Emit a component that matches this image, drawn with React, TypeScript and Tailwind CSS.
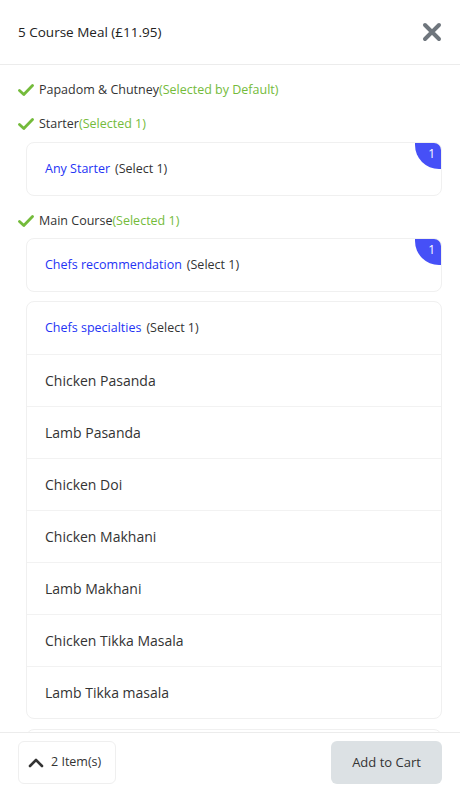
import React from "react";

const font = { fontFamily: '"Open Sans", "Liberation Sans", sans-serif' };

function Check() {
  return (
    <svg width="16" height="14" viewBox="0 0 16 14" className="mr-[5px] shrink-0">
      <path d="M1.5 7.5 L5.8 11.5 L14.5 2.5" fill="none" stroke="#74bb3b" strokeWidth="2.8" strokeLinecap="round" strokeLinejoin="round" />
    </svg>
  );
}

function Heading({ name, note }: { name: string; note: string }) {
  return (
    <div className="flex h-[34px] items-center text-[12.5px] text-[#333]">
      <Check />
      <span>{name}</span>
      <span className="text-[#74bb3b]">{note}</span>
    </div>
  );
}

function GroupCard({ title, badge, children }: { title: string; badge?: boolean; children?: React.ReactNode }) {
  return (
    <div className="relative ml-2 overflow-hidden rounded-lg border border-[#f0f0f0] bg-white">
      {badge && (
        <div className="absolute right-0 top-0 flex h-[26px] w-[26px] items-start justify-end rounded-bl-[24px] bg-[#4650f7] pr-[6px] pt-[2px] text-[12px] text-white">
          1
        </div>
      )}
      <div className="flex h-[52px] items-center px-[18px] text-[12.5px]">
        <span className="text-[#2433f5]">{title}</span>
        <span className="ml-[5px] text-[#333]">(Select 1)</span>
      </div>
      {children}
    </div>
  );
}

const dishes = [
  "Chicken Pasanda",
  "Lamb Pasanda",
  "Chicken Doi",
  "Chicken Makhani",
  "Lamb Makhani",
  "Chicken Tikka Masala",
  "Lamb Tikka masala",
];

export default function App() {
  return (
    <div className="flex h-[800px] w-full flex-col bg-white" style={font}>
      <header className="flex h-[65px] shrink-0 items-center justify-between border-b border-[#ececec] pl-[18px] pr-[18px]">
        <h1 className="text-[13.5px] text-[#222]">5 Course Meal (£11.95)</h1>
        <svg width="20" height="20" viewBox="0 0 20 20">
          <path d="M3 3 L17 17 M17 3 L3 17" stroke="#6f767d" strokeWidth="4" strokeLinecap="round" />
        </svg>
      </header>

      <main className="flex-1 overflow-hidden px-[18px] pt-[8px]">
        <Heading name="Papadom & Chutney" note="(Selected by Default)" />
        <Heading name="Starter" note="(Selected 1)" />
        <div className="mt-px">
          <GroupCard title="Any Starter" badge />
        </div>
        <div className="mt-[8px]">
          <Heading name="Main Course" note="(Selected 1)" />
        </div>
        <div>
          <GroupCard title="Chefs recommendation" badge />
        </div>
        <div className="mt-[9px]">
          <GroupCard title="Chefs specialties">
            {dishes.map((d) => (
              <div key={d} className="flex h-[52px] items-center border-t border-[#f2f2f2] px-[18px] text-[14px] text-[#333]">
                {d}
              </div>
            ))}
          </GroupCard>
        </div>
        <div className="mt-[10px]">
          <GroupCard title="Extras" />
        </div>
      </main>

      <footer className="flex h-[68px] shrink-0 items-start justify-between border-t border-[#ececec] px-[18px] pt-[8px]">
        <button className="flex h-[43px] items-center gap-[7px] whitespace-nowrap rounded-md border border-[#efefef] pl-[9px] pr-[14px] text-[12.5px] text-[#333]">
          <svg width="16" height="12" viewBox="0 0 16 12" className="shrink-0">
            <path d="M2 9 L8 3 L14 9" fill="none" stroke="#333" strokeWidth="2.6" strokeLinecap="round" strokeLinejoin="round" />
          </svg>
          <span>2 Item(s)</span>
        </button>
        <button className="h-[43px] w-[111px] whitespace-nowrap rounded-md bg-[#dce1e4] text-[13px] text-[#333]">Add to Cart</button>
      </footer>
    </div>
  );
}
